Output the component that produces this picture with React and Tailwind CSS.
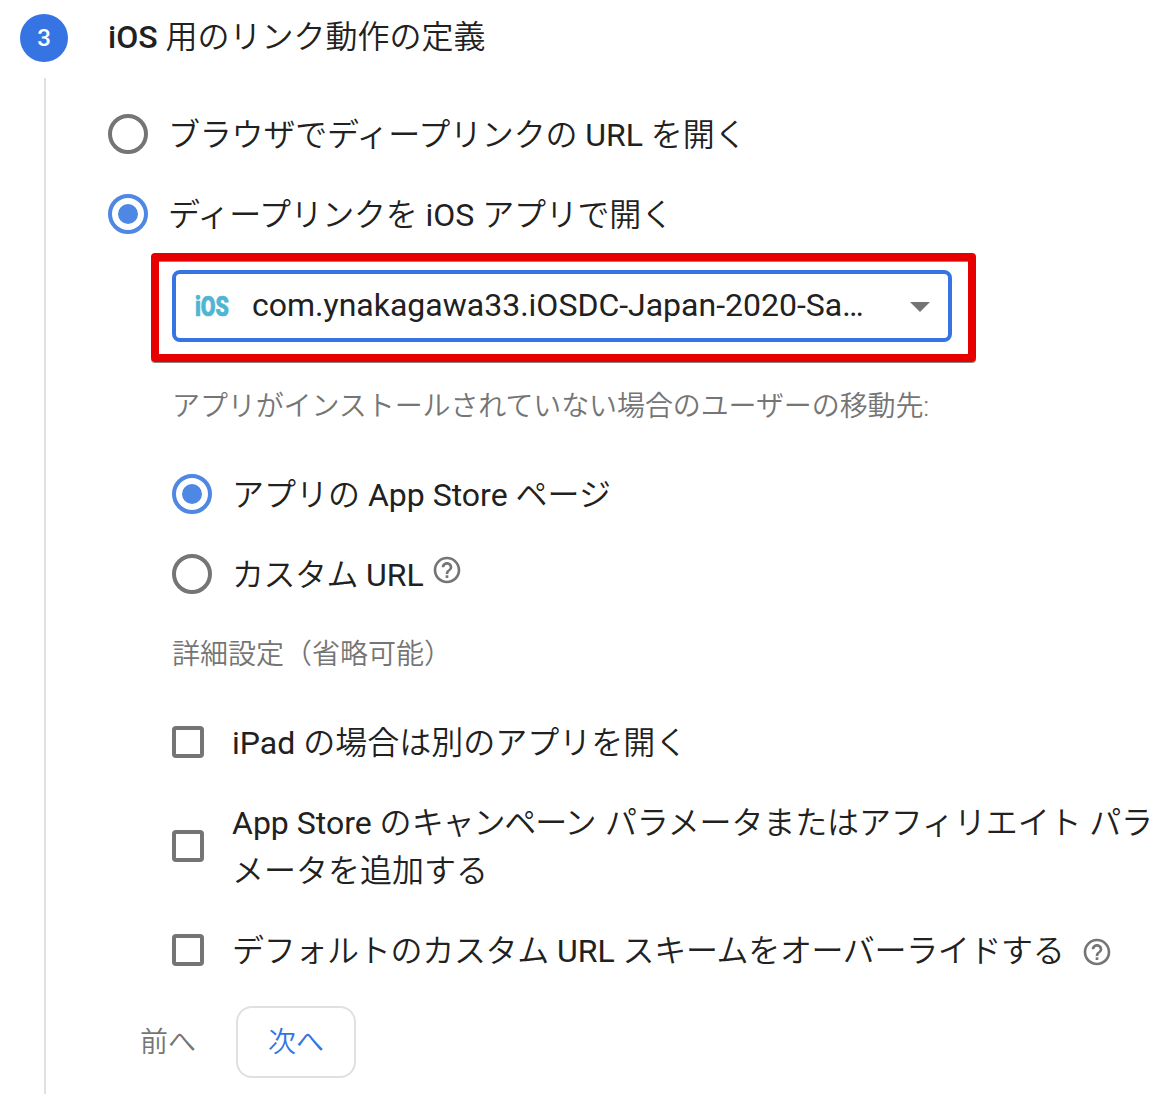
import { MdHelpOutline } from "react-icons/md";

function Radio({ checked }) {
  return (
    <span
      className={`flex h-10 w-10 shrink-0 items-center justify-center rounded-full border-4 ${
        checked ? "border-[#4f87e5]" : "border-[#757575]"
      }`}
    >
      {checked && <span className="h-5 w-5 rounded-full bg-[#4f87e5]" />}
    </span>
  );
}

function RadioRow({ checked, children }) {
  return (
    <div className="flex h-20 items-center gap-5">
      <Radio checked={checked} />
      <span className="whitespace-nowrap pt-0.5 leading-[48px]">{children}</span>
    </div>
  );
}

function CheckRow({ children }) {
  return (
    <div className="flex h-24 items-center gap-7">
      <span className="h-8 w-8 shrink-0 rounded-[4px] border-4 border-[#757575]" />
      <span className="whitespace-nowrap pt-0.5 leading-[48px]">{children}</span>
    </div>
  );
}

function AppSelect() {
  return (
    <div className="relative mt-4 flex h-[72px] w-[780px] items-center rounded-lg border-4 border-[#3574e2] pl-5 pr-[18px]">
      <svg className="h-5 w-[34px] shrink-0 overflow-visible" viewBox="0 0 34 20">
        <text
          x="-1"
          y="20"
          textLength="34"
          lengthAdjust="spacingAndGlyphs"
          strokeWidth="0.7"
          className="fill-[#4fb5d3] stroke-[#4fb5d3] font-['Roboto'] text-[28px] font-black"
        >
          iOS
        </text>
      </svg>
      <span className="ml-[22px] grow whitespace-nowrap pb-0.5 leading-[48px]">
        com.ynakagawa33.iOSDC-Japan-2020-Sa…
      </span>
      <svg className="mt-0.5 h-[10px] w-5 shrink-0 fill-[#757575]" viewBox="0 0 20 10">
        <path d="M0 0h20L10 10z" />
      </svg>
      <div className="pointer-events-none absolute -bottom-6 -left-[25px] -right-7 -top-[21px] rounded-[4px] border-8 border-[#e60000] shadow-[0_1px_0_#888,inset_0_1px_0_#888]" />
    </div>
  );
}

export default function App() {
  return (
    <div className="flex h-[1094px] w-[1174px] overflow-hidden bg-white pl-5 font-['Roboto','Noto_Sans_CJK_JP_DemiLight','Noto_Sans_CJK_JP',sans-serif] text-[32px] text-[#212121]">
      <div className="flex w-12 shrink-0 flex-col pt-3.5">
        <div className="flex h-12 w-12 items-center justify-center rounded-full bg-[#3574e2] text-2xl font-medium text-white">
          3
        </div>
        <div className="ml-6 mt-4 w-0.5 grow bg-[#e0e0e0]" />
      </div>
      <div className="ml-10 grow pt-3.5">
        <h2 className="flex h-12 items-center gap-2 whitespace-nowrap pb-0.5 leading-[48px]">
          <span className="font-medium">iOS</span>
          <span className="font-[350]">用のリンク動作の定義</span>
        </h2>
        <div className="mt-8">
          <RadioRow>
            <span className="font-[350] tracking-[-0.2px]">ブラウザでディープリンクの</span> URL{" "}
            <span className="font-[350] tracking-[-0.2px]">を開く</span>
          </RadioRow>
          <RadioRow checked>
            <span className="font-[350] tracking-[-0.3px]">ディープリンクを</span> iOS{" "}
            <span className="font-[350] tracking-[-0.2px]">アプリで開く</span>
          </RadioRow>
        </div>
        <div className="ml-16">
          <AppSelect />
          <p className="mt-[41px] whitespace-nowrap text-[28px] font-[350] leading-[48px] tracking-[-0.1px] text-[#757575]">
            アプリがインストールされていない場合のユーザーの移動先:
          </p>
          <div className="mt-[23px]">
            <RadioRow checked>
              <span className="font-[350]">アプリの</span> App Store{" "}
              <span className="font-[350]">ページ</span>
            </RadioRow>
            <RadioRow>
              <span className="flex">
                <span>
                  <span className="font-[350] tracking-[-0.5px]">カスタム</span> URL
                </span>
                <MdHelpOutline className="ml-[7.5px] mt-[3px] h-8 w-8 text-[#757575]" />
              </span>
            </RadioRow>
          </div>
          <p className="h-20 pt-px text-[28px] font-[350] leading-[80px] text-[#757575]">
            詳細設定（省略可能）
          </p>
          <div className="flex flex-col gap-2">
            <CheckRow>
              iPad <span className="font-[350]">の場合は別のアプリを開く</span>
            </CheckRow>
            <CheckRow>
              App Store <span className="font-[350]">の</span>
              <span className="mr-[1.5px] font-[350] tracking-[-1.1px]">キャンペーン</span>{" "}
              <span className="font-[350] tracking-[-0.12px]">
                パラメータまたはアフィリエイト パラ
              </span>
              <br />
              <span className="font-[350]">メータを追加する</span>
            </CheckRow>
            <CheckRow>
              <span className="flex items-center">
                <span>
                  <span className="font-[350] tracking-[-0.3px]">デフォルトのカスタム</span> URL{" "}
                  <span className="font-[350] tracking-[-0.35px]">
                    スキームをオーバーライドする
                  </span>
                </span>
                <MdHelpOutline className="ml-[16.5px] mt-0.5 h-8 w-8 text-[#757575]" />
              </span>
            </CheckRow>
          </div>
        </div>
        <div className="ml-8 mt-2 flex h-[72px] items-center text-[28px] font-[350]">
          <button className="pt-0.5 text-[#757575]">前へ</button>
          <button className="ml-10 h-[72px] w-[120px] rounded-2xl border-2 border-[#e0e0e0] pt-0.5 text-[#3574e2]">
            次へ
          </button>
        </div>
      </div>
    </div>
  );
}
